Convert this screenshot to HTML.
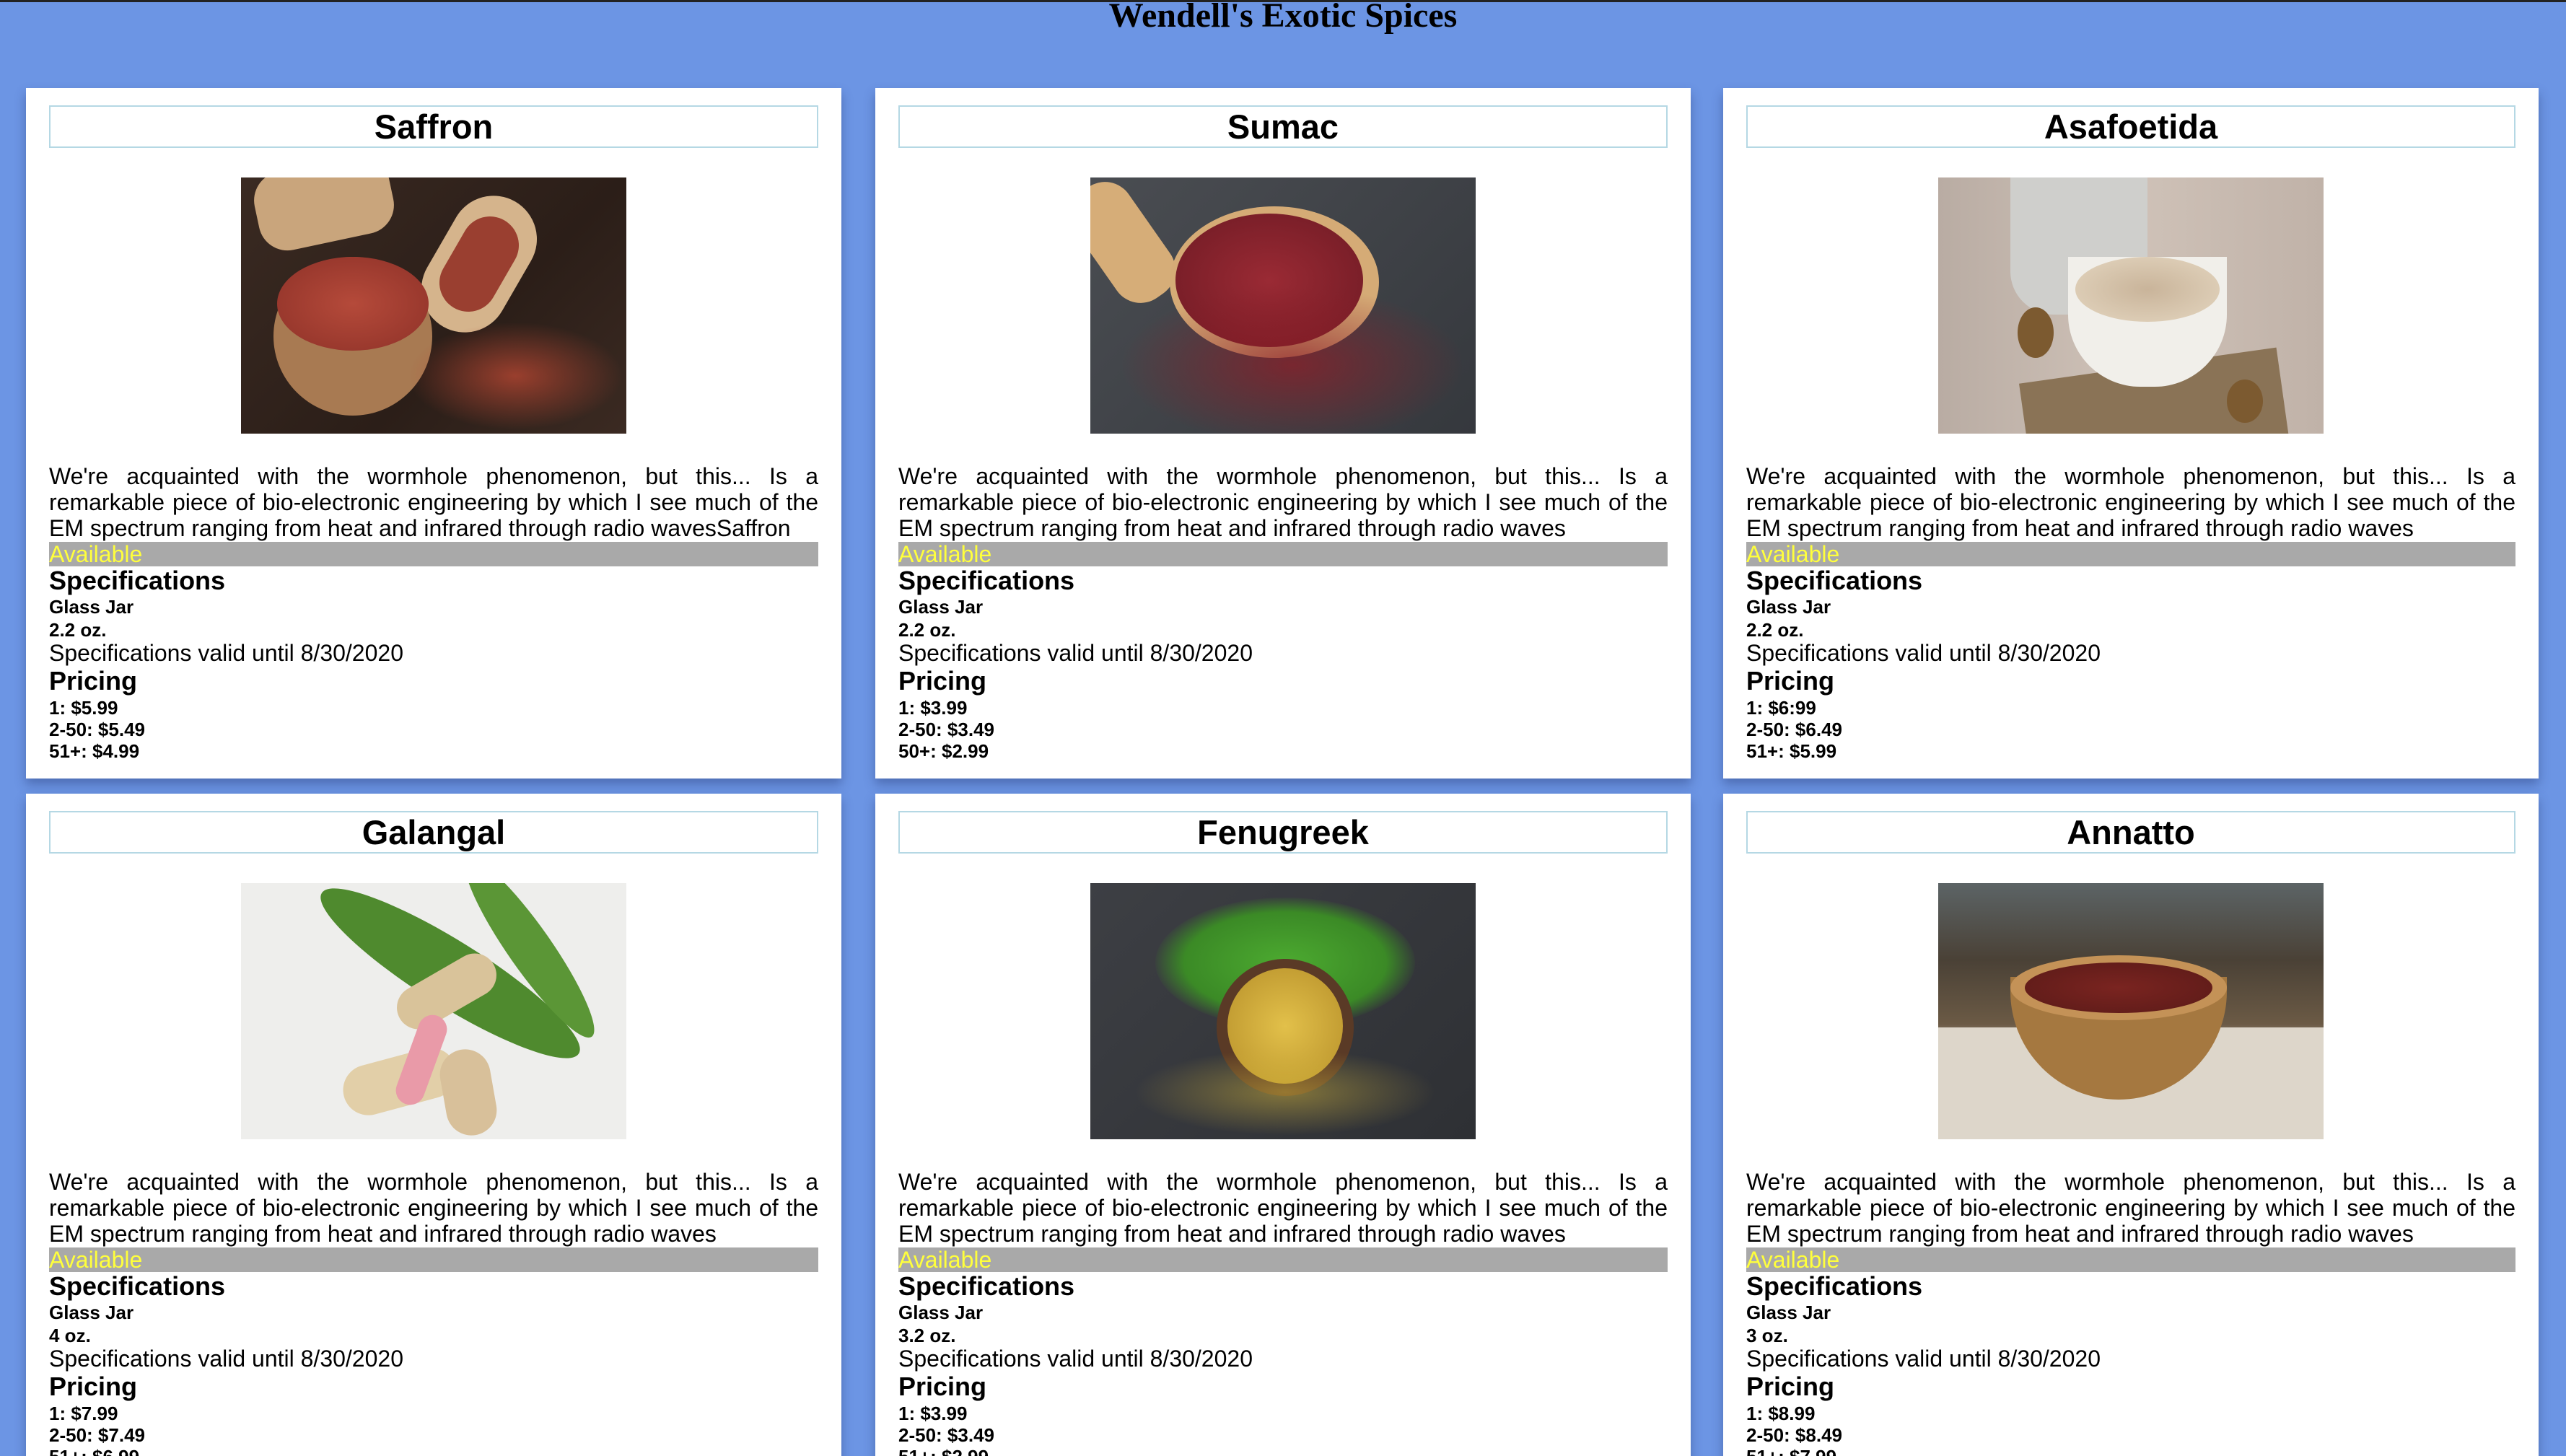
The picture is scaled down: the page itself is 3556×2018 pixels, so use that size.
<!DOCTYPE html>
<html><head><meta charset="utf-8"><style>
*{box-sizing:border-box;margin:0;padding:0}
html,body{width:3556px;height:2018px;overflow:hidden}
body{background:#6c95e4;font-family:"Liberation Sans",Arial,sans-serif;color:#000;position:relative}
.topline{position:absolute;left:0;top:0;width:3556px;height:3px;background:#222}
h1{position:absolute;left:0;width:3556px;text-align:center;font-family:"Liberation Serif",serif;font-weight:bold;font-size:48px;line-height:48px;top:-2px}
.card{position:absolute;width:1130px;height:957px;background:#fff;padding:24px 32px;box-shadow:0 8px 14px rgba(40,60,120,.45)}
.t{height:59px;border:2px solid #b5d8e4;text-align:center;font-weight:bold;font-size:47px;line-height:55px}
.img{width:534px;height:355px;margin:41px auto 41px;position:relative;overflow:hidden}
.d{font-size:32px;line-height:36px;text-align:justify;height:108px}
.av{background:#a9a9a9;color:#ffff3c;font-size:32px;line-height:34px;height:34px;margin-top:1px}
.h{font-weight:bold;font-size:36px;line-height:40px}
.b{font-weight:bold;font-size:26px}
.g{line-height:33px}.o{line-height:30px}
.v{font-size:32px;line-height:34px}
.p{font-weight:bold;font-size:36px;line-height:44px}
.pr{font-weight:bold;font-size:26px;line-height:30px}
.img div{position:absolute}
</style></head><body>
<div class="topline"></div>
<h1>Wendell's Exotic Spices</h1>

<div class="card" style="left:36px;top:122px">
<div class="t">Saffron</div>
<div class="img" style="background:linear-gradient(135deg,#3a2a22,#2b1e18 60%,#3b2a22)">
<div style="left:20px;top:-20px;width:190px;height:110px;border-radius:40px;background:#c9a57c;transform:rotate(-12deg)"></div>
<div style="left:270px;top:20px;width:120px;height:200px;border-radius:60px;background:#d5b48c;transform:rotate(30deg)"></div>
<div style="left:290px;top:50px;width:80px;height:140px;border-radius:40px;background:#9a3f30;transform:rotate(30deg)"></div>
<div style="left:45px;top:110px;width:220px;height:220px;border-radius:50%;background:#a87a52"></div>
<div style="left:50px;top:110px;width:210px;height:130px;border-radius:50%;background:radial-gradient(#b54a3a,#8e3128)"></div>
<div style="left:230px;top:200px;width:300px;height:150px;border-radius:50%;background:radial-gradient(rgba(180,70,50,.8),rgba(60,30,25,0) 70%)"></div>
</div>
<div class="d">We're acquainted with the wormhole phenomenon, but this... Is a remarkable piece of bio-electronic engineering by which I see much of the EM spectrum ranging from heat and infrared through radio wavesSaffron</div>
<div class="av">Available</div>
<div class="h">Specifications</div>
<div class="b g">Glass Jar</div><div class="b o">2.2 oz.</div>
<div class="v">Specifications valid until 8/30/2020</div>
<div class="p">Pricing</div>
<div class="pr">1: $5.99</div><div class="pr">2-50: $5.49</div><div class="pr">51+: $4.99</div>
</div>

<div class="card" style="left:1213px;top:122px">
<div class="t">Sumac</div>
<div class="img" style="background:linear-gradient(135deg,#4a4d52,#35383d)">
<div style="left:0;top:0;width:90px;height:180px;background:#d6ad78;transform:rotate(-35deg);border-radius:40px"></div>
<div style="left:110px;top:40px;width:290px;height:210px;border-radius:50%;background:#d5ab76"></div>
<div style="left:118px;top:50px;width:260px;height:185px;border-radius:50%;background:radial-gradient(#9a2a34,#6e1a24)"></div>
<div style="left:40px;top:150px;width:480px;height:220px;border-radius:50%;background:radial-gradient(rgba(140,30,40,.75),rgba(60,60,65,0) 70%)"></div>
</div>
<div class="d">We're acquainted with the wormhole phenomenon, but this... Is a remarkable piece of bio-electronic engineering by which I see much of the EM spectrum ranging from heat and infrared through radio waves</div>
<div class="av">Available</div>
<div class="h">Specifications</div>
<div class="b g">Glass Jar</div><div class="b o">2.2 oz.</div>
<div class="v">Specifications valid until 8/30/2020</div>
<div class="p">Pricing</div>
<div class="pr">1: $3.99</div><div class="pr">2-50: $3.49</div><div class="pr">50+: $2.99</div>
</div>

<div class="card" style="left:2388px;top:122px">
<div class="t">Asafoetida</div>
<div class="img" style="background:linear-gradient(90deg,#b9aca3,#cfc2b8 50%,#c0b2a8)">
<div style="left:100px;top:-20px;width:190px;height:210px;border-radius:0 0 60px 60px;background:#cfcfcc"></div>
<div style="left:120px;top:260px;width:360px;height:140px;background:#8a7356;transform:rotate(-8deg)"></div>
<div style="left:180px;top:110px;width:220px;height:180px;border-radius:0 0 100px 100px;background:#f1efea"></div>
<div style="left:190px;top:110px;width:200px;height:90px;border-radius:50%;background:radial-gradient(#c9b49a,#e4d6c0)"></div>
<div style="left:110px;top:180px;width:50px;height:70px;border-radius:50%;background:#7c5a30"></div>
<div style="left:400px;top:280px;width:50px;height:60px;border-radius:50%;background:#7c5a30"></div>
</div>
<div class="d">We're acquainted with the wormhole phenomenon, but this... Is a remarkable piece of bio-electronic engineering by which I see much of the EM spectrum ranging from heat and infrared through radio waves</div>
<div class="av">Available</div>
<div class="h">Specifications</div>
<div class="b g">Glass Jar</div><div class="b o">2.2 oz.</div>
<div class="v">Specifications valid until 8/30/2020</div>
<div class="p">Pricing</div>
<div class="pr">1: $6:99</div><div class="pr">2-50: $6.49</div><div class="pr">51+: $5.99</div>
</div>

<div class="card" style="left:36px;top:1100px">
<div class="t">Galangal</div>
<div class="img" style="background:#eeeeec">
<div style="left:80px;top:80px;width:420px;height:90px;border-radius:50%;background:#4f8a2e;transform:rotate(32deg)"></div>
<div style="left:250px;top:60px;width:300px;height:60px;border-radius:50%;background:#5b9636;transform:rotate(55deg)"></div>
<div style="left:210px;top:120px;width:150px;height:60px;border-radius:30px;background:#d9c39a;transform:rotate(-30deg)"></div>
<div style="left:140px;top:240px;width:160px;height:70px;border-radius:35px;background:#e2cfa8;transform:rotate(-15deg)"></div>
<div style="left:230px;top:180px;width:40px;height:130px;border-radius:20px;background:#e99aa8;transform:rotate(20deg)"></div>
<div style="left:280px;top:230px;width:70px;height:120px;border-radius:35px;background:#d8c09a;transform:rotate(-10deg)"></div>
</div>
<div class="d">We're acquainted with the wormhole phenomenon, but this... Is a remarkable piece of bio-electronic engineering by which I see much of the EM spectrum ranging from heat and infrared through radio waves</div>
<div class="av">Available</div>
<div class="h">Specifications</div>
<div class="b g">Glass Jar</div><div class="b o">4 oz.</div>
<div class="v">Specifications valid until 8/30/2020</div>
<div class="p">Pricing</div>
<div class="pr">1: $7.99</div><div class="pr">2-50: $7.49</div><div class="pr">51+: $6.99</div>
</div>

<div class="card" style="left:1213px;top:1100px">
<div class="t">Fenugreek</div>
<div class="img" style="background:linear-gradient(135deg,#3d3f44,#2e3034)">
<div style="left:90px;top:20px;width:360px;height:180px;border-radius:50%;background:radial-gradient(#4caa30,#3b8a26 55%,rgba(50,50,50,0) 72%)"></div>
<div style="left:175px;top:105px;width:190px;height:190px;border-radius:50%;background:#5a3a26"></div>
<div style="left:190px;top:118px;width:160px;height:160px;border-radius:50%;background:radial-gradient(#e2c04a,#b7902a)"></div>
<div style="left:60px;top:230px;width:420px;height:120px;border-radius:50%;background:radial-gradient(rgba(210,180,60,.5),rgba(60,60,60,0) 70%)"></div>
</div>
<div class="d">We're acquainted with the wormhole phenomenon, but this... Is a remarkable piece of bio-electronic engineering by which I see much of the EM spectrum ranging from heat and infrared through radio waves</div>
<div class="av">Available</div>
<div class="h">Specifications</div>
<div class="b g">Glass Jar</div><div class="b o">3.2 oz.</div>
<div class="v">Specifications valid until 8/30/2020</div>
<div class="p">Pricing</div>
<div class="pr">1: $3.99</div><div class="pr">2-50: $3.49</div><div class="pr">51+: $2.99</div>
</div>

<div class="card" style="left:2388px;top:1100px">
<div class="t">Annatto</div>
<div class="img" style="background:linear-gradient(180deg,#5c6466 0%,#4a4136 30%,#6b5a45 55%,#cfc6b6 70%,#e3ddd2 100%)">
<div style="left:0;top:200px;width:534px;height:155px;background:#ddd6ca"></div>
<div style="left:100px;top:130px;width:300px;height:170px;border-radius:0 0 150px 150px;background:#a57840"></div>
<div style="left:100px;top:100px;width:300px;height:90px;border-radius:50%;background:#c49257"></div>
<div style="left:120px;top:110px;width:260px;height:70px;border-radius:50%;background:radial-gradient(#7a2420,#5a1a18)"></div>
</div>
<div class="d">We're acquainted with the wormhole phenomenon, but this... Is a remarkable piece of bio-electronic engineering by which I see much of the EM spectrum ranging from heat and infrared through radio waves</div>
<div class="av">Available</div>
<div class="h">Specifications</div>
<div class="b g">Glass Jar</div><div class="b o">3 oz.</div>
<div class="v">Specifications valid until 8/30/2020</div>
<div class="p">Pricing</div>
<div class="pr">1: $8.99</div><div class="pr">2-50: $8.49</div><div class="pr">51+: $7.99</div>
</div>
</body></html>
